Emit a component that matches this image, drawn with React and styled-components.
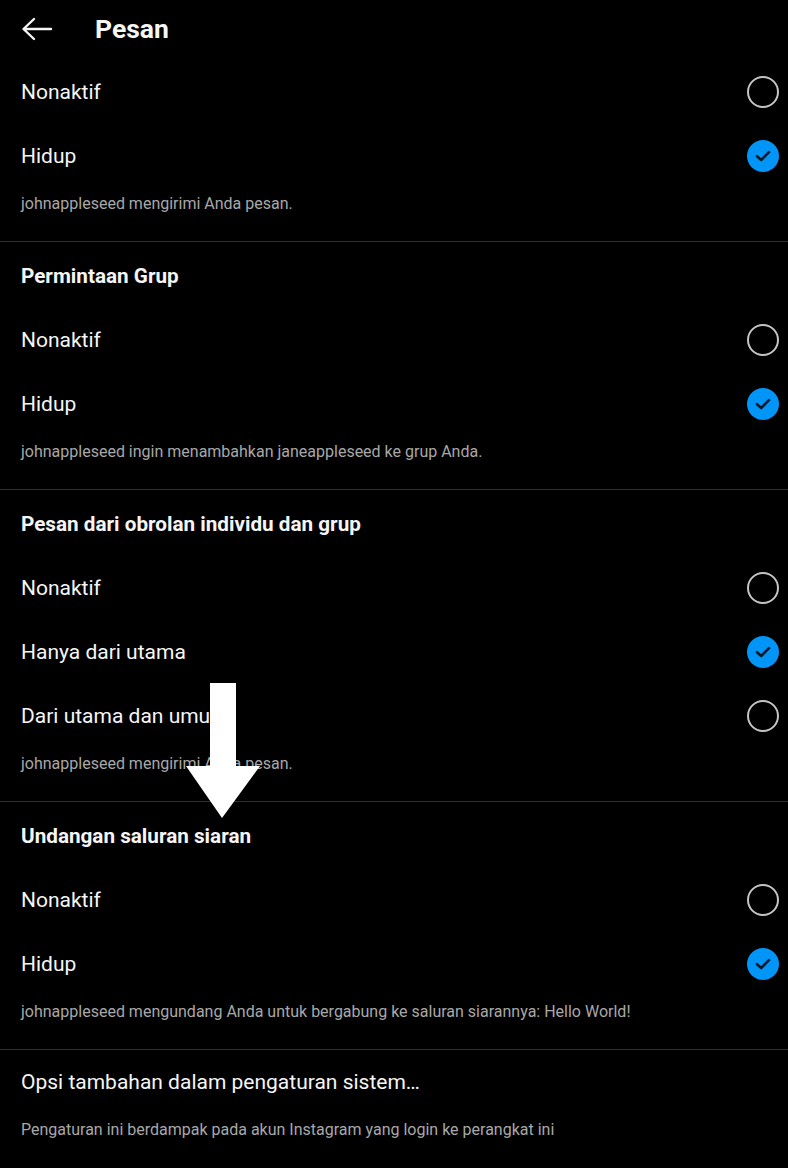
import React from 'react';
import styled, { createGlobalStyle } from 'styled-components';

const GlobalStyle = createGlobalStyle`
  html, body {
    margin: 0;
    padding: 0;
    background: #000;
  }
  body {
    font-family: Roboto, "Liberation Sans", sans-serif;
    color: #f5f5f5;
    -webkit-font-smoothing: antialiased;
  }
`;

const Page = styled.div`
  position: relative;
  width: 788px;
  min-height: 1168px;
  background: #000;
  overflow: hidden;
`;

const TopBar = styled.header`
  display: flex;
  align-items: center;
  height: 60px;
  padding: 0 21px;
  box-sizing: border-box;
`;

const BackButton = styled.button`
  display: flex;
  align-items: center;
  justify-content: center;
  width: 32px;
  height: 32px;
  padding: 0;
  margin: -2px 42px 0 0;
  background: none;
  border: 0;
  color: #f5f5f5;
`;

const Title = styled.h1`
  margin: -3px 0 0;
  font-size: 26.5px;
  font-weight: 700;
  color: #f5f5f5;
`;

const Section = styled.section`
  border-bottom: ${p => (p.$last ? 'none' : '1px solid #303030')};
`;

const Row = styled.div`
  display: flex;
  align-items: center;
  justify-content: space-between;
  height: ${p => (p.$head ? '66px' : '64px')};
  padding: ${p => (p.$head ? '2px' : '0')} 9px 0 21px;
  box-sizing: border-box;
`;

const Heading = styled.div`
  font-size: ${p => (p.$light ? '21px' : '20.7px')};
  font-weight: ${p => (p.$light ? 400 : 700)};
  color: #f5f5f5;
`;

const Label = styled.span`
  font-size: 21px;
  color: #f5f5f5;
`;

const Note = styled.p`
  margin: 0;
  padding: 6px 21px 27px;
  font-size: 16px;
  line-height: 20px;
  color: #a8a8a8;
`;

const Radio = styled.span`
  display: flex;
  align-items: center;
  justify-content: center;
  width: 32px;
  height: 32px;
  border-radius: 50%;
  box-sizing: border-box;
  border: ${p => (p.$on ? 'none' : '2.5px solid #c4c4c4')};
  background: ${p => (p.$on ? '#0095f6' : 'transparent')};
`;

const Pointer = styled.svg`
  position: absolute;
  left: 186px;
  top: 683px;
`;

const Check = () => (
  <svg width="16" height="12" viewBox="0 0 16 12">
    <path d="M2 6.2l4.2 3.8L14 2.2" fill="none" stroke="#0b1a2a" strokeWidth="2.6" strokeLinecap="round" strokeLinejoin="round" />
  </svg>
);

const Option = ({ label, on }) => (
  <Row>
    <Label>{label}</Label>
    <Radio $on={on}>{on && <Check />}</Radio>
  </Row>
);

const sections = [
  {
    options: [['Nonaktif', false], ['Hidup', true]],
    note: 'johnappleseed mengirimi Anda pesan.',
  },
  {
    title: 'Permintaan Grup',
    options: [['Nonaktif', false], ['Hidup', true]],
    note: 'johnappleseed ingin menambahkan janeappleseed ke grup Anda.',
  },
  {
    title: 'Pesan dari obrolan individu dan grup',
    options: [['Nonaktif', false], ['Hanya dari utama', true], ['Dari utama dan umum', false]],
    note: 'johnappleseed mengirimi Anda pesan.',
  },
  {
    title: 'Undangan saluran siaran',
    options: [['Nonaktif', false], ['Hidup', true]],
    note: 'johnappleseed mengundang Anda untuk bergabung ke saluran siarannya: Hello World!',
  },
];

export default function App() {
  return (
    <Page>
      <GlobalStyle />
      <TopBar>
        <BackButton aria-label="Kembali">
          <svg width="32" height="24" viewBox="0 0 32 24">
            <path d="M30 12H3M13 2L2.5 12L13 22" fill="none" stroke="#f5f5f5" strokeWidth="2.4" strokeLinecap="round" strokeLinejoin="round" />
          </svg>
        </BackButton>
        <Title>Pesan</Title>
      </TopBar>

      {sections.map((s, i) => (
        <Section key={i}>
          {s.title && (
            <Row $head>
              <Heading>{s.title}</Heading>
            </Row>
          )}
          {s.options.map(([label, on]) => (
            <Option key={label} label={label} on={on} />
          ))}
          <Note>{s.note}</Note>
        </Section>
      ))}

      <Section $last>
        <Row>
          <Heading $light>Opsi tambahan dalam pengaturan sistem…</Heading>
        </Row>
        <Note>Pengaturan ini berdampak pada akun Instagram yang login ke perangkat ini</Note>
      </Section>

      <Pointer width="74" height="136" viewBox="0 0 74 136">
        <path d="M24 0H50V83H74L36 135L0 83H24Z" fill="#fff" />
      </Pointer>
    </Page>
  );
}
